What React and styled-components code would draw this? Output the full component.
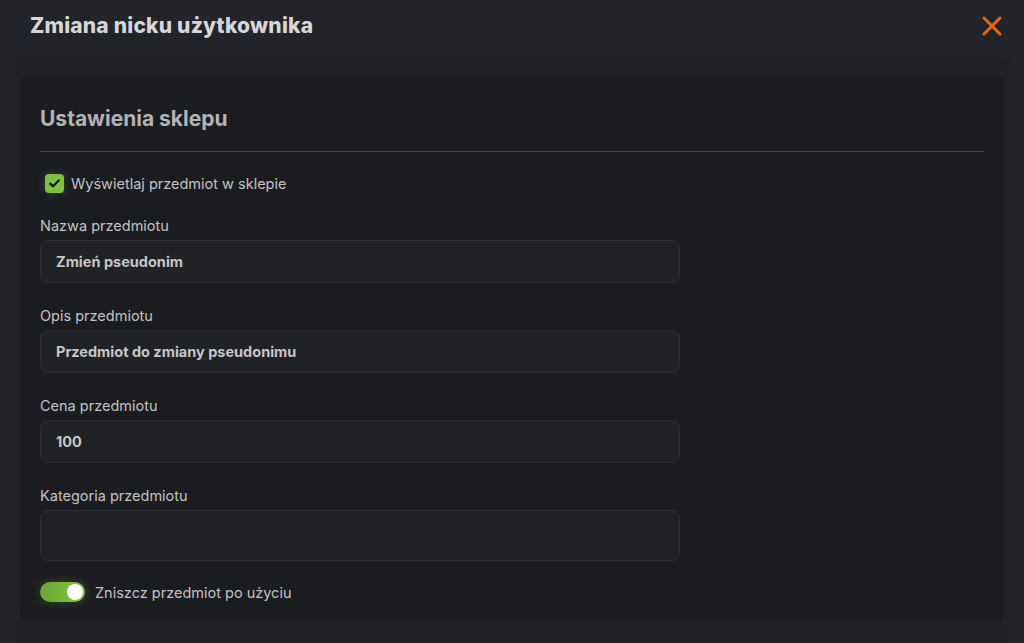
import styled, { createGlobalStyle } from "styled-components";

const GlobalStyle = createGlobalStyle`
  html, body {
    margin: 0;
    padding: 0;
    background: #222429;
    font-family: "Inter", "Noto Sans", sans-serif;
  }
  * { box-sizing: border-box; }
`;

const Modal = styled.div`
  width: 1024px;
  height: 643px;
  background: #222429;
  display: flex;
  flex-direction: column;
  overflow: hidden;
`;

const Header = styled.div`
  flex-shrink: 0;
  height: 57px;
  padding: 0 20px 6px 30px;
  display: flex;
  align-items: center;
  justify-content: space-between;
`;

const Title = styled.h1`
  margin: 0;
  font-size: 21px;
  font-weight: 800;
  color: #d6d6d8;
  letter-spacing: 0.2px;
`;

const CloseButton = styled.button`
  background: none;
  border: 0;
  padding: 0;
  width: 24px;
  height: 24px;
  cursor: pointer;
  display: flex;
  align-items: center;
  justify-content: center;
`;

const Body = styled.div`
  flex: 1;
  margin: 0 14px 0 17px;
  padding: 20px 6px 20px 3px;
  background: #202226;
  border-radius: 8px 8px 0 0;
`;

const Card = styled.div`
  background: #1b1c20;
  border-radius: 8px;
  padding: 29px 20px 19px;
`;

const CardTitle = styled.h2`
  margin: 0;
  font-size: 21px;
  font-weight: 700;
  color: #b3b3b6;
  padding-bottom: 20px;
  border-bottom: 1px solid #45464b;
`;

const CheckRow = styled.label`
  display: flex;
  align-items: center;
  gap: 7px;
  margin: 22px 0 0 5px;
  font-size: 14.5px;
  color: #c2c2c5;
`;

const Checkbox = styled.span`
  width: 19px;
  height: 19px;
  border-radius: 4px;
  background: #7cc142;
  box-shadow: 0 0 10px rgba(124, 193, 66, 0.25);
  display: flex;
  align-items: center;
  justify-content: center;
`;

const Field = styled.div`
  margin-top: ${(p) => p.$top}px;
  display: flex;
  flex-direction: column;
  gap: 5px;
`;

const Label = styled.span`
  font-size: 14.5px;
  color: #c2c2c5;
  line-height: 18px;
`;

const Input = styled.div`
  width: 640px;
  height: ${(p) => p.$height || 43}px;
  background: #212226;
  border: 1px solid #2c2d32;
  border-radius: 8px;
  padding: 0 15px;
  display: flex;
  align-items: center;
  font-size: 14.5px;
  font-weight: 700;
  color: #c6c6c9;
`;

const ToggleRow = styled.div`
  display: flex;
  align-items: center;
  gap: 10px;
  margin-top: 21px;
  font-size: 14.5px;
  color: #c2c2c5;
`;

const Toggle = styled.span`
  width: 45px;
  height: 20px;
  border-radius: 10px;
  background: linear-gradient(90deg, #6ba631, #84c444);
  box-shadow: 0 0 10px rgba(124, 193, 66, 0.3);
  display: flex;
  align-items: center;
  justify-content: ${(p) => (p.$on ? "flex-end" : "flex-start")};
  padding: 0 2px;

  &::after {
    content: "";
    width: 16px;
    height: 16px;
    border-radius: 50%;
    background: #fff;
  }
`;

export default function App() {
  return (
    <Modal>
      <GlobalStyle />
      <Header>
        <Title>Zmiana nicku użytkownika</Title>
        <CloseButton aria-label="close">
          <svg width="20" height="20" viewBox="0 0 20 20">
            <path d="M2 2 L18 18 M18 2 L2 18" stroke="#e8690f" strokeWidth="3" strokeLinecap="round" />
          </svg>
        </CloseButton>
      </Header>
      <Body>
        <Card>
          <CardTitle>Ustawienia sklepu</CardTitle>
          <CheckRow>
            <Checkbox>
              <svg width="11" height="9" viewBox="0 0 11 9">
                <path d="M1.2 4.6 L4 7.3 L9.8 1.5" stroke="#111" strokeWidth="2.2" fill="none" strokeLinecap="round" strokeLinejoin="round" />
              </svg>
            </Checkbox>
            Wyświetlaj przedmiot w sklepie
          </CheckRow>
          <Field $top={24}>
            <Label>Nazwa przedmiotu</Label>
            <Input>Zmień pseudonim</Input>
          </Field>
          <Field $top={24}>
            <Label>Opis przedmiotu</Label>
            <Input>Przedmiot do zmiany pseudonimu</Input>
          </Field>
          <Field $top={24}>
            <Label>Cena przedmiotu</Label>
            <Input>100</Input>
          </Field>
          <Field $top={24}>
            <Label>Kategoria przedmiotu</Label>
            <Input $height={51} />
          </Field>
          <ToggleRow>
            <Toggle $on />
            Zniszcz przedmiot po użyciu
          </ToggleRow>
        </Card>
      </Body>
    </Modal>
  );
}
